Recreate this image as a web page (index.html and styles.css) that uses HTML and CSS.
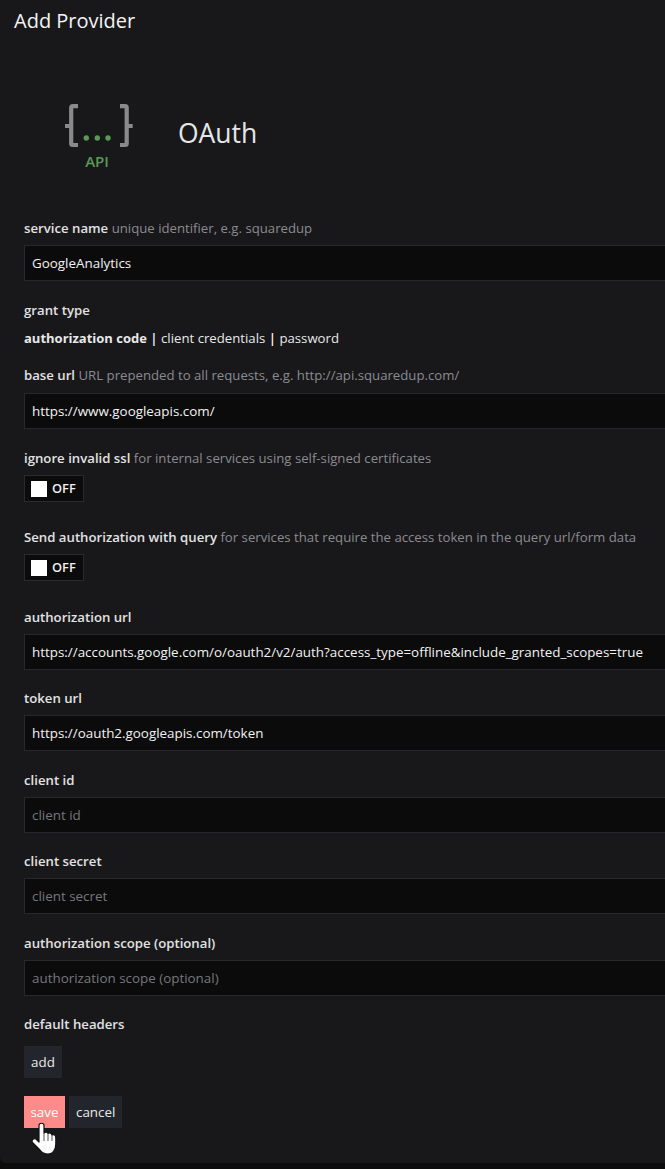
FILE: index.html
```html
<!DOCTYPE html>
<html lang="en">
<head>
    <meta charset="UTF-8">
    <meta name="viewport" content="width=device-width, initial-scale=1.0">
    <title>Add Provider</title>
    <link rel="stylesheet" href="styles.css">
</head>
<body>
    <div class="panel">
        <h1 class="title">Add Provider</h1>

        <div class="provider">
            <svg class="provider-logo" viewBox="0 0 71 66" width="71" height="66">
                <g fill="none" stroke="#8a8a8a" stroke-width="4.2" stroke-linejoin="round">
                    <path d="M15 3.200H9.700Q8.200 3.200 8.200 4.700V23M2 23H8.200V40.500Q8.200 42 9.700 42H15"></path>
                    <path d="M57 3.200H62.200Q63.700 3.200 63.700 4.700V23M69.700 23H63.700V40.500Q63.700 42 62.200 42H57"></path>
                </g>
                <g fill="#5a9a55">
                    <circle cx="23.300" cy="35" r="2.700"></circle>
                    <circle cx="34.300" cy="35" r="2.700"></circle>
                    <circle cx="45" cy="35" r="2.700"></circle>
                </g>
                <text class="logo-text" x="34" y="63.500" text-anchor="middle">API</text>
            </svg>
            <span class="provider-name">OAuth</span>
        </div>

        <form class="form">
            <div class="field field-wide">
                <label class="label"><b>service name</b> <span class="hint">unique identifier, e.g. squaredup</span></label>
                <input type="text" class="input" value="GoogleAnalytics">
            </div>

            <div class="field">
                <label class="label"><b>grant type</b></label>
                <div class="grant-options">
                    <b>authorization code</b> <span class="sep">|</span> client credentials <span class="sep">|</span> password
                </div>
            </div>

            <div class="field field-wide field-base">
                <label class="label"><b>base url</b> <span class="hint">URL prepended to all requests, e.g. http://api.squaredup.com/</span></label>
                <input type="text" class="input" value="https://www.googleapis.com/">
            </div>

            <div class="field field-toggle">
                <label class="label"><b>ignore invalid ssl</b> <span class="hint">for internal services using self-signed certificates</span></label>
                <div class="toggle"><span class="toggle-knob"></span><span class="toggle-text">OFF</span></div>
            </div>

            <div class="field field-toggle field-toggle-last">
                <label class="label"><b>Send authorization with query</b> <span class="hint">for services that require the access token in the query url/form data</span></label>
                <div class="toggle"><span class="toggle-knob"></span><span class="toggle-text">OFF</span></div>
            </div>

            <div class="field">
                <label class="label"><b>authorization url</b></label>
                <input type="text" class="input" value="https://accounts.google.com/o/oauth2/v2/auth?access_type=offline&amp;include_granted_scopes=true">
            </div>

            <div class="field field-wide">
                <label class="label"><b>token url</b></label>
                <input type="text" class="input" value="https://oauth2.googleapis.com/token">
            </div>

            <div class="field">
                <label class="label"><b>client id</b></label>
                <input type="text" class="input" placeholder="client id">
            </div>

            <div class="field field-wide">
                <label class="label"><b>client secret</b></label>
                <input type="text" class="input" placeholder="client secret">
            </div>

            <div class="field">
                <label class="label"><b>authorization scope (optional)</b></label>
                <input type="text" class="input" placeholder="authorization scope (optional)">
            </div>

            <div class="field field-headers">
                <label class="label"><b>default headers</b></label>
                <button type="button" class="btn">add</button>
            </div>

            <div class="actions">
                <button type="button" class="btn btn-save">save</button>
                <button type="button" class="btn">cancel</button>
                <svg class="cursor" viewBox="0 0 26 33" width="26" height="33">
                    <path fill="#fff" stroke="#111" stroke-width="1.200" stroke-linejoin="round" d="M8 3.500C8 0.500 13 0.500 13 3.500V11C14.500 9.500 16.500 10 17 11.500C18.500 10.500 20.500 11 21 13C22.500 12 24.800 13 24.800 15.500V22C24.800 28 21.500 32 17 32C13 32 11 30.500 9 28L1.500 20.500C0 18.500 3 15.500 5 17L8 20Z"></path>
                    <path fill="none" stroke="#555" stroke-width="1" d="M13 11V19M17 11.500V19M21 13V19"></path>
                </svg>
            </div>
        </form>
    </div>
</body>
</html>
```

FILE: styles.css
```css
* { margin: 0; padding: 0; box-sizing: border-box; }
html, body {
    height: 100%;
    overflow: hidden;
}
body {
    font-family: "Open Sans", "Noto Sans", sans-serif;
    background: #0c0c0d;
    color: #e8e8e8;
    font-size: 13.2px;
}
b {
    font-weight: 600;
}
.panel {
    width: 700px;
    height: 1163px;
    background: #18181b;
    border-radius: 0 0 0 6px;
}
.title {
    font-size: 20px;
    font-weight: 400;
    line-height: 28px;
    padding: 7px 0 0 14px;
    color: #f4f4f4;
}
.provider {
    display: flex;
    align-items: center;
    height: 66px;
    margin: 68px 0 0 63px;
}
.provider-logo {
    flex: none;
}
.logo-text {
    font-family: "Open Sans", sans-serif;
    font-size: 15px;
    font-weight: 600;
    fill: #5a9a55;
}
.provider-name {
    font-size: 26.5px;
    margin-left: 44px;
    padding-bottom: 6px;
    color: #e6e6e6;
}
.form {
    padding: 50px 0 0 24px;
}
.field {
    margin-bottom: 19px;
}
.field-wide {
    margin-bottom: 20px;
}
.field-base .label {
    margin-bottom: 9px;
}
.field-toggle {
    margin-bottom: 26px;
}
.field-toggle-last {
    margin-bottom: 27px;
}
.field-headers {
    margin-bottom: 18px;
}
.field-headers .label {
    margin-bottom: 13px;
}
.label {
    display: block;
    line-height: 18px;
    margin-bottom: 8px;
    color: #e2e2e2;
}
.hint {
    color: #8b8b8f;
}
.input {
    display: block;
    width: 100%;
    height: 36px;
    padding: 0 7px;
    background: #0b0b0c;
    border: 1px solid #28282c;
    color: #f2f2f2;
    font-family: inherit;
    font-size: 13.4px;
    outline: none;
}
.input::placeholder {
    color: #77777b;
}
.grant-options {
    line-height: 18px;
    margin-top: 10px;
}
.grant-options b {
    font-weight: 700;
    font-size: 13px;
}
.sep {
    font-weight: 600;
    color: #fff;
}
.toggle {
    display: inline-flex;
    align-items: center;
    gap: 5px;
    height: 27px;
    width: 60px;
    padding-left: 6px;
    background: #0b0b0c;
    border: 1px solid #2a2a2e;
    color: #f0f0f0;
    font-size: 12.8px;
    font-weight: 600;
    vertical-align: top;
}
.toggle-knob {
    width: 16px;
    height: 16px;
    background: #fff;
}
.toggle-text {
    padding-bottom: 2px;
}
.btn {
    display: inline-block;
    height: 32px;
    padding: 0 7px;
    background: #22262c;
    border: none;
    color: #eaeaea;
    font-family: inherit;
    font-size: 13.4px;
    vertical-align: top;
}
.actions {
    position: relative;
    display: flex;
    gap: 4px;
}
.btn-save {
    width: 41px;
    padding: 0;
    background: #ff8a8a;
    color: #fff;
}
.cursor {
    position: absolute;
    left: 7px;
    top: 26px;
}
```
